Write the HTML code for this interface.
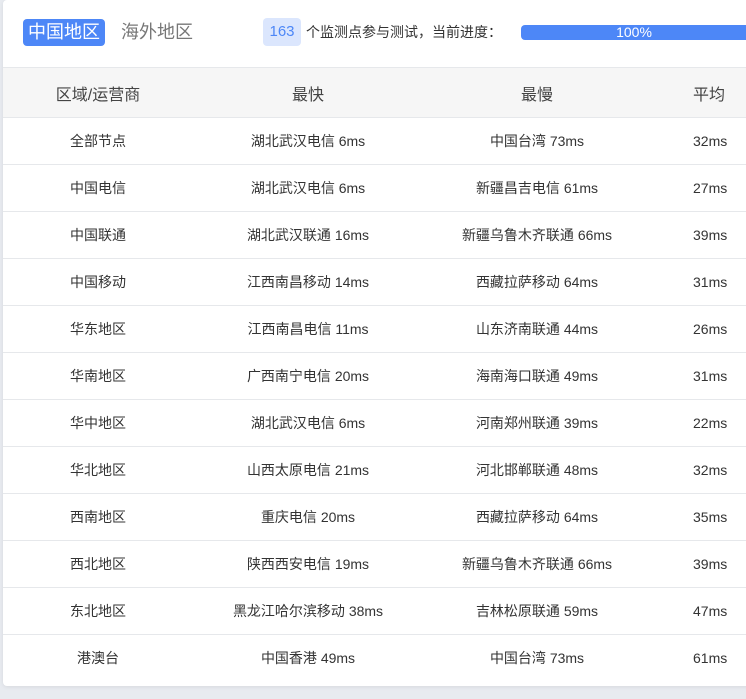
<!DOCTYPE html><html><head><meta charset="utf-8"><style>
body{margin:0;width:746px;height:699px;background:#e8ebf0;font-family:"Liberation Sans","Noto Sans CJK SC",sans-serif;overflow:hidden;position:relative}
.card{position:absolute;left:3px;top:0;width:760px;height:686px;background:#fff;border-radius:4px;box-shadow:0 1px 4px rgba(0,0,0,.08)}
.tab{position:absolute;top:19px;height:27px;line-height:27px;font-size:18px;padding:0 5px;border-radius:4px}
.t1{left:20px;background:#4d87f7;color:#fff}
.t2{left:113px;color:#777}
.badge{position:absolute;left:260px;top:18px;width:38px;height:28px;line-height:28px;text-align:center;background:#dbe6fd;color:#4d87f7;border-radius:4px;font-size:15px}
.txt{position:absolute;left:303px;top:22px;font-size:14px;color:#333;line-height:20px}
.bar{position:absolute;left:518px;top:25px;width:230px;height:15px;background:#4d87f7;border-radius:4px;color:#fff;font-size:14px;line-height:15px;text-align:center;padding-right:4px;box-sizing:border-box}
table{position:absolute;left:0;top:67px;border-collapse:collapse;width:760px}
td,th{text-align:center;font-weight:normal;color:#333;font-size:14px;border-top:1px solid #e6e8eb;padding:0}
th{height:49px;background:#f6f6f6;font-size:16px;color:#444}
td{height:46px}
th:nth-child(1),td:nth-child(1){width:190px}
th:nth-child(2),td:nth-child(2){width:230px}
th:nth-child(3),td:nth-child(3){width:228px}
</style></head><body><div class="card">
<div class="tab t1">中国地区</div><div class="tab t2">海外地区</div>
<div class="badge">163</div><div class="txt">个监测点参与测试，当前进度：</div>
<div class="bar">100%</div>
<table>
<tr><th>区域/运营商</th><th>最快</th><th>最慢</th><th style="text-align:left;padding-left:42px">平均</th></tr>
<tr><td>全部节点</td><td>湖北武汉电信 6ms</td><td>中国台湾 73ms</td><td style="text-align:left;padding-left:42px">32ms</td></tr>
<tr><td>中国电信</td><td>湖北武汉电信 6ms</td><td>新疆昌吉电信 61ms</td><td style="text-align:left;padding-left:42px">27ms</td></tr>
<tr><td>中国联通</td><td>湖北武汉联通 16ms</td><td>新疆乌鲁木齐联通 66ms</td><td style="text-align:left;padding-left:42px">39ms</td></tr>
<tr><td>中国移动</td><td>江西南昌移动 14ms</td><td>西藏拉萨移动 64ms</td><td style="text-align:left;padding-left:42px">31ms</td></tr>
<tr><td>华东地区</td><td>江西南昌电信 11ms</td><td>山东济南联通 44ms</td><td style="text-align:left;padding-left:42px">26ms</td></tr>
<tr><td>华南地区</td><td>广西南宁电信 20ms</td><td>海南海口联通 49ms</td><td style="text-align:left;padding-left:42px">31ms</td></tr>
<tr><td>华中地区</td><td>湖北武汉电信 6ms</td><td>河南郑州联通 39ms</td><td style="text-align:left;padding-left:42px">22ms</td></tr>
<tr><td>华北地区</td><td>山西太原电信 21ms</td><td>河北邯郸联通 48ms</td><td style="text-align:left;padding-left:42px">32ms</td></tr>
<tr><td>西南地区</td><td>重庆电信 20ms</td><td>西藏拉萨移动 64ms</td><td style="text-align:left;padding-left:42px">35ms</td></tr>
<tr><td>西北地区</td><td>陕西西安电信 19ms</td><td>新疆乌鲁木齐联通 66ms</td><td style="text-align:left;padding-left:42px">39ms</td></tr>
<tr><td>东北地区</td><td>黑龙江哈尔滨移动 38ms</td><td>吉林松原联通 59ms</td><td style="text-align:left;padding-left:42px">47ms</td></tr>
<tr><td>港澳台</td><td>中国香港 49ms</td><td>中国台湾 73ms</td><td style="text-align:left;padding-left:42px">61ms</td></tr>
</table></div></body></html>
